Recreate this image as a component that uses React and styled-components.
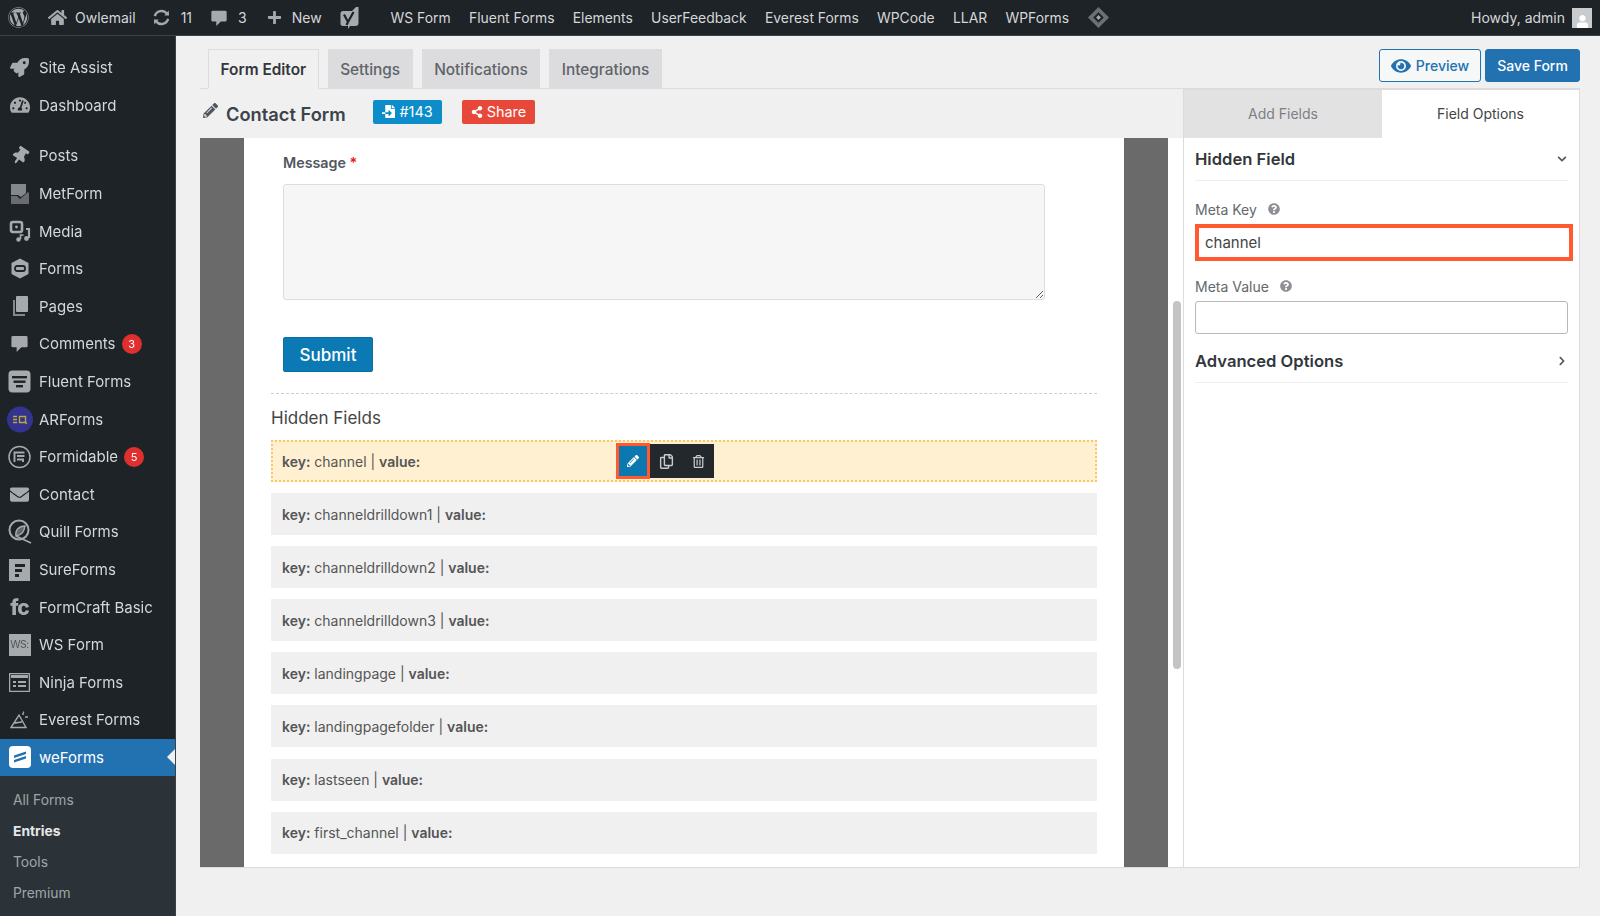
import React from "react";
import styled, { createGlobalStyle } from "styled-components";
import {
  FaWordpress,
  FaHome,
  FaPlus,
  FaRocket,
  FaTachometerAlt,
  FaThumbtack,
  FaEnvelope,
  FaPencilAlt,
  FaShareAlt,
  FaEye,
  FaQuestionCircle,
  FaChevronDown,
  FaChevronRight,
  FaUser,
  FaRegCopy,
  FaRegTrashAlt,
  FaFileImport,
} from "react-icons/fa";

const GlobalStyle = createGlobalStyle`
  html, body {
    margin: 0;
    padding: 0;
    height: 916px;
    overflow: hidden;
    background: #f0f0f1;
    font-family: Inter, "Liberation Sans", sans-serif;
  }
  * { box-sizing: border-box; }
`;

/* dashicons-ish drawings that the icon packages don't have */
const SyncIcon = () => (
  <svg width="19" height="19" viewBox="0 0 20 20" fill="none" stroke="currentColor" strokeWidth="2.6">
    <path d="M3 8.500a7.200 7.200 0 0 1 12.600-2.600" />
    <path d="M17 11.500a7.200 7.200 0 0 1-12.600 2.600" />
    <path d="M13 8l5-.2L17.600 2.600z" fill="currentColor" stroke="none" />
    <path d="M7 12l-5 .2.400 5.200z" fill="currentColor" stroke="none" />
  </svg>
);
const BubbleIcon = ({ size = 18 }) => (
  <svg width={size} height={size} viewBox="0 0 20 20" fill="currentColor">
    <path d="M3 2h14a1.500 1.500 0 0 1 1.500 1.500v9A1.500 1.500 0 0 1 17 14h-5l-5 5v-5H3a1.500 1.500 0 0 1-1.500-1.500v-9A1.500 1.500 0 0 1 3 2z" />
  </svg>
);
const YoastIcon = () => (
  <svg width="19" height="22" viewBox="0 0 19 22">
    <path d="M3 4h9l4-4h2.500L18.500 16a3 3 0 0 1-3 3H10l-2 3V19H3a2.500 2.500 0 0 1-2.500-2.500v-10A2.500 2.500 0 0 1 3 4z" fill="#a7aaad" />
    <path d="M4 7.500l4 7.500-1.500 3M13.500 5L8 15" fill="none" stroke="#1d2327" strokeWidth="2.200" />
  </svg>
);
const DiamondIcon = () => (
  <svg width="23" height="23" viewBox="0 0 24 24">
    <path d="M12 1l11 11-11 11L1 12z" fill="#6c7075" />
    <path d="M12 6.500l5.500 5.500-5.500 5.500L6.500 12z" fill="#1d2327" />
    <path d="M12 9.500l2.500 2.500-2.500 2.500L9.500 12z" fill="#a7aaad" />
  </svg>
);
const MetFormIcon = () => (
  <svg width="22" height="24" viewBox="0 0 22 24" fill="currentColor">
    <path d="M2 2h15v9l-5 4-3-2-7 0z" opacity=".75" />
    <path d="M2 14h6l3 3 8-7 1 1v11H2z" opacity=".55" />
  </svg>
);
const MediaIcon = () => (
  <svg width="22" height="23" viewBox="0 0 22 23" fill="none" stroke="currentColor">
    <rect x="2" y="2" width="11" height="10" rx="2" strokeWidth="2.600" />
    <circle cx="7.500" cy="7" r="1.400" fill="currentColor" stroke="none" />
    <path d="M17 9h3v9" strokeWidth="2.200" />
    <circle cx="17.500" cy="18.500" r="2.400" fill="currentColor" stroke="none" />
    <circle cx="9.500" cy="19.500" r="2.200" fill="currentColor" stroke="none" />
    <path d="M11.500 19v-4h3" strokeWidth="1.600" />
  </svg>
);
const FormsIcon = () => (
  <svg width="20" height="21" viewBox="0 0 20 21">
    <path d="M10 0.500l8.500 4.500v11L10 20.500 1.500 16V5z" fill="currentColor" />
    <rect x="5" y="8" width="10" height="5" rx="2" fill="none" stroke="#1d2327" strokeWidth="1.800" />
  </svg>
);
const PagesIcon = () => (
  <svg width="20" height="22" viewBox="0 0 20 22" fill="currentColor">
    <rect x="6" y="1" width="12" height="16" rx="1" />
    <path d="M3 5h2v14h10v2H3z" opacity=".75" />
  </svg>
);
const FluentIcon = () => (
  <svg width="23" height="23" viewBox="0 0 23 23">
    <rect x="0.500" y="0.500" width="22" height="22" rx="4" fill="#a7aaad" />
    <rect x="4" y="6" width="15" height="2.400" fill="#1d2327" />
    <rect x="5.500" y="10.500" width="12" height="2.400" fill="#1d2327" />
    <rect x="8" y="15" width="7" height="2.400" fill="#1d2327" />
  </svg>
);
const ArFormsIcon = () => (
  <svg width="26" height="27" viewBox="0 0 26 27">
    <circle cx="13" cy="13.500" r="13" fill="#34338f" />
    <path d="M6 10.500h4M6 13.500h4M6 16.500h4M12.500 10.500h6v6h-6zM18 16.500l2 1" fill="none" stroke="#b6a93a" strokeWidth="1.400" />
  </svg>
);
const FormidableIcon = () => (
  <svg width="23" height="24" viewBox="0 0 23 24" fill="none" stroke="#a7aaad">
    <circle cx="11.500" cy="12" r="10.500" strokeWidth="1.500" />
    <path d="M6.500 17V7.500h10M9 11h7.500M9 14.500h6v2.500" strokeWidth="1.900" />
  </svg>
);
const QuillIcon = () => (
  <svg width="24" height="25" viewBox="0 0 24 25" fill="none" stroke="#a7aaad">
    <circle cx="11" cy="11" r="9.500" strokeWidth="2" />
    <path d="M8 17c-1-6 3-10 9-10-1 6-3 9-9 10zM8 17l15 7" strokeWidth="1.500" fill="#a7aaad" fillOpacity=".5" />
  </svg>
);
const SureIcon = () => (
  <svg width="21" height="22" viewBox="0 0 21 22">
    <rect width="21" height="22" fill="#a7aaad" />
    <path d="M6 5h10v3H6zM6 10h7v3H6zM6 15h4v3H6z" fill="#1d2327" />
  </svg>
);
const NinjaIcon = () => (
  <svg width="21" height="19" viewBox="0 0 21 19">
    <rect x="0.500" y="0.500" width="20" height="18" rx="1" fill="none" stroke="#a7aaad" strokeWidth="1.500" />
    <rect x="2" y="2" width="17" height="3" fill="#a7aaad" />
    <path d="M4 8h3v2H4zM4 12h3v2H4zM9 8h8v2H9zM9 12h8v2H9z" fill="#a7aaad" />
  </svg>
);
const EverestIcon = () => (
  <svg width="20" height="18" viewBox="0 0 20 18" fill="none" stroke="#a7aaad" strokeWidth="1.400">
    <path d="M1 16.500h15L9 4z" />
    <path d="M4 12c3 0 5-1 8-1M12 3h2M15 6h3M13 0.800l1 1" />
  </svg>
);
const WeFormsIcon = () => (
  <svg width="22" height="22" viewBox="0 0 22 22">
    <rect width="22" height="22" rx="4" fill="#fff" />
    <path d="M5 9.500l12-4v2.500l-12 4zM5 14l12-4v2.500l-12 4z" fill="#2271b1" />
  </svg>
);

function FcGlyph({ children }) {
  return <FcText>{children}</FcText>;
}
function WsGlyph({ children }) {
  return <WsBox>{children}</WsBox>;
}

const menuTop = [
  { label: "Site Assist", icon: <FaRocket size={19} /> },
  { label: "Dashboard", icon: <FaTachometerAlt size={20} /> },
];
const menuMain = [
  { label: "Posts", icon: <FaThumbtack size={18} style={{ transform: "rotate(35deg)" }} /> },
  { label: "MetForm", icon: <MetFormIcon /> },
  { label: "Media", icon: <MediaIcon /> },
  { label: "Forms", icon: <FormsIcon /> },
  { label: "Pages", icon: <PagesIcon /> },
  { label: "Comments", icon: <BubbleIcon size={19} />, badge: 3 },
  { label: "Fluent Forms", icon: <FluentIcon /> },
  { label: "ARForms", icon: <ArFormsIcon /> },
  { label: "Formidable", icon: <FormidableIcon />, badge: 5 },
  { label: "Contact", icon: <FaEnvelope size={19} /> },
  { label: "Quill Forms", icon: <QuillIcon /> },
  { label: "SureForms", icon: <SureIcon /> },
  { label: "FormCraft Basic", icon: <FcGlyph>fc</FcGlyph> },
  { label: "WS Form", icon: <WsGlyph>WS:</WsGlyph> },
  { label: "Ninja Forms", icon: <NinjaIcon /> },
  { label: "Everest Forms", icon: <EverestIcon /> },
];
const subMenu = ["All Forms", "Entries", "Tools", "Premium"];
const barLinks = ["WS Form", "Fluent Forms", "Elements", "UserFeedback", "Everest Forms", "WPCode", "LLAR", "WPForms"];
const hiddenRows = [
  "channeldrilldown1",
  "channeldrilldown2",
  "channeldrilldown3",
  "landingpage",
  "landingpagefolder",
  "lastseen",
  "first_channel",
];

export default function App() {
  return (
    <Page>
      <GlobalStyle />
      <AdminBar>
        <BarGroup>
          <BarIcon $left={8}>
            <FaWordpress size={21} />
          </BarIcon>
          <BarIcon $left={19}>
            <FaHome size={19} />
          </BarIcon>
          <BarText $left={8}>Owlemail</BarText>
          <BarIcon $left={16}>
            <SyncIcon />
          </BarIcon>
          <BarText $left={10}>11</BarText>
          <BarIcon $left={18}>
            <BubbleIcon />
          </BarIcon>
          <BarText $left={10}>3</BarText>
          <BarIcon $left={20}>
            <FaPlus size={15} />
          </BarIcon>
          <BarText $left={10}>New</BarText>
          <BarIcon $left={18}>
            <YoastIcon />
          </BarIcon>
          <BarLinks>
            {barLinks.map((l) => (
              <BarLink key={l}>{l}</BarLink>
            ))}
            <DiamondIcon />
          </BarLinks>
        </BarGroup>
        <Howdy>
          Howdy, admin
          <Avatar>
            <FaUser size={13} />
          </Avatar>
        </Howdy>
      </AdminBar>

      <Body>
        <Sidebar>
          {menuTop.map((m) => (
            <MenuRow key={m.label}>
              <MenuIcon>{m.icon}</MenuIcon>
              {m.label}
            </MenuRow>
          ))}
          <MenuSeparator />
          {menuMain.map((m) => (
            <MenuRow key={m.label}>
              <MenuIcon>{m.icon}</MenuIcon>
              {m.label}
              {m.badge ? <Badge>{m.badge}</Badge> : null}
            </MenuRow>
          ))}
          <ActiveRow>
            <MenuIcon>
              <WeFormsIcon />
            </MenuIcon>
            weForms
          </ActiveRow>
          <SubMenu>
            {subMenu.map((s) => (
              <SubItem key={s} $current={s === "Entries"}>
                {s}
              </SubItem>
            ))}
          </SubMenu>
        </Sidebar>

        <Main>
          <TopRow>
            <Tabs>
              <Tab $active>Form Editor</Tab>
              <Tab>Settings</Tab>
              <Tab>Notifications</Tab>
              <Tab>Integrations</Tab>
            </Tabs>
            <Actions>
              <PreviewButton>
                <FaEye size={20} />
                Preview
              </PreviewButton>
              <SaveButton>Save Form</SaveButton>
            </Actions>
          </TopRow>

          <Builder>
            <Editor>
              <TitleRow>
                <TitlePencil>
                  <FaPencilAlt size={15} color="#50575e" />
                </TitlePencil>
                <FormTitle>Contact Form</FormTitle>
                <IdBadge>
                  <FaFileImport size={13} />
                  #143
                </IdBadge>
                <ShareBadge>
                  <FaShareAlt size={12} />
                  Share
                </ShareBadge>
              </TitleRow>
              <Canvas>
                <Stripe />
                <FormSheet>
                  <MessageBlock>
                    <FieldLabel>
                      Message <Req>*</Req>
                    </FieldLabel>
                    <MessageArea readOnly />
                    <SubmitButton>Submit</SubmitButton>
                  </MessageBlock>
                  <HiddenBlock>
                    <HiddenTitle>Hidden Fields</HiddenTitle>
                    <HiddenRow $selected>
                      <span>
                        <b>key:</b> channel | <b>value:</b>
                      </span>
                      <RowTools>
                        <EditTool>
                          <FaPencilAlt size={12} />
                        </EditTool>
                        <Tool>
                          <FaRegCopy size={15} />
                        </Tool>
                        <Tool>
                          <FaRegTrashAlt size={13} />
                        </Tool>
                      </RowTools>
                    </HiddenRow>
                    {hiddenRows.map((k) => (
                      <HiddenRow key={k}>
                        <span>
                          <b>key:</b> {k} | <b>value:</b>
                        </span>
                      </HiddenRow>
                    ))}
                  </HiddenBlock>
                </FormSheet>
                <Stripe />
                <ScrollTrack>
                  <ScrollThumb />
                </ScrollTrack>
              </Canvas>
            </Editor>

            <Panel>
              <PanelTabs>
                <PanelTab>Add Fields</PanelTab>
                <PanelTab $active>Field Options</PanelTab>
              </PanelTabs>
              <PanelBody>
                <SectionHead>
                  Hidden Field
                  <FaChevronDown size={10} color="#50575e" />
                </SectionHead>
                <OptionLabel>
                  Meta Key <FaQuestionCircle size={12} color="#8c8f94" />
                </OptionLabel>
                <KeyInput readOnly value="channel" />
                <OptionLabel>
                  Meta Value <FaQuestionCircle size={12} color="#8c8f94" />
                </OptionLabel>
                <ValueInput readOnly value="" />
                <AdvancedHead>
                  Advanced Options
                  <FaChevronRight size={10} color="#50575e" />
                </AdvancedHead>
              </PanelBody>
            </Panel>
          </Builder>
        </Main>
      </Body>
    </Page>
  );
}

const Page = styled.div`
  width: 1600px;
  height: 916px;
  overflow: hidden;
  display: flex;
  flex-direction: column;
  filter: blur(0.5px);
`;

const AdminBar = styled.header`
  height: 36px;
  flex: none;
  display: flex;
  align-items: center;
  justify-content: space-between;
  background: #1d2327;
  color: #d5d7d9;
  font-size: 14px;
  padding-right: 8px;
  border-bottom: 1px solid #3c4146;
`;

const BarGroup = styled.div`
  display: flex;
  align-items: center;
`;

const BarIcon = styled.span`
  display: flex;
  color: #a7aaad;
  margin-left: ${(p) => p.$left}px;
`;

const BarText = styled.span`
  margin-left: ${(p) => p.$left || 0}px;
  white-space: nowrap;
`;

const BarLink = styled.span`
  font-size: 13.9px;
  white-space: nowrap;
`;

const BarLinks = styled.div`
  display: flex;
  align-items: center;
  gap: 18.3px;
  margin-left: 32px;
`;

const Howdy = styled.div`
  display: flex;
  align-items: center;
  gap: 7px;
  white-space: nowrap;
`;

const Avatar = styled.span`
  width: 20px;
  height: 20px;
  background: #c9cbcd;
  color: #fff;
  display: flex;
  align-items: flex-end;
  justify-content: center;
`;

const Body = styled.div`
  flex: 1;
  display: flex;
  min-height: 0;
`;

const Sidebar = styled.nav`
  width: 176px;
  flex: none;
  background: #1d2327;
  color: #d5d7d9;
  font-size: 15px;
  padding-top: 13px;
  border-right: 1px solid #3c4146;
`;

const MenuRow = styled.div`
  height: 37.6px;
  display: flex;
  align-items: center;
  padding-left: 39px;
  position: relative;
  white-space: nowrap;
`;

const MenuIcon = styled.span`
  position: absolute;
  left: 0;
  top: 0;
  width: 39px;
  height: 100%;
  display: flex;
  align-items: center;
  justify-content: center;
  color: #a7aaad;
`;

const MenuSeparator = styled.div`
  height: 13px;
`;

const Badge = styled.span`
  width: 20px;
  height: 20px;
  margin-left: 6px;
  border-radius: 50%;
  background: #e02f2f;
  color: #fff;
  font-size: 11px;
  display: flex;
  align-items: center;
  justify-content: center;
`;

const ActiveRow = styled(MenuRow)`
  background: #2271b1;
  color: #fff;
  &::after {
    content: "";
    position: absolute;
    right: 0;
    top: 50%;
    margin-top: -8px;
    border: 8px solid transparent;
    border-right-color: #f0f0f1;
    border-left-width: 0;
  }
`;

const SubMenu = styled.div`
  background: #2c3338;
  padding-top: 9px;
  height: 160px;
`;

const SubItem = styled.div`
  height: 31px;
  line-height: 31px;
  padding-left: 13px;
  font-size: 13.8px;
  color: ${(p) => (p.$current ? "#e6e7e8" : "#a1a5a9")};
  font-weight: ${(p) => (p.$current ? 700 : 400)};
`;

const FcText = styled.span`
  font-size: 21px;
  line-height: 1;
  font-weight: 800;
  letter-spacing: -1px;
  color: #a7aaad;
`;

const WsBox = styled.span`
  width: 22px;
  height: 22px;
  background: #a7aaad;
  color: #50555a;
  font-size: 10.5px;
  letter-spacing: -0.5px;
  display: flex;
  align-items: center;
  justify-content: center;
`;

const Main = styled.main`
  flex: 1;
  min-width: 0;
  padding: 0 20px 0 24px;
  background: #f0f0f1;
`;

const TopRow = styled.div`
  height: 53px;
  display: flex;
  align-items: flex-end;
  justify-content: space-between;
  border-bottom: 1px solid #dcdcde;
`;

const Tabs = styled.div`
  display: flex;
  gap: 9px;
  margin-left: 8px;
  margin-bottom: -1px;
`;

const Tab = styled.div`
  height: 40px;
  padding: 0 11.5px;
  display: flex;
  align-items: center;
  font-size: 15.4px;
  font-weight: ${(p) => (p.$active ? 600 : 500)};
  color: ${(p) => (p.$active ? "#32373c" : "#5f6469")};
  background: ${(p) => (p.$active ? "#f0f0f1" : "#dcdcde")};
  border: 1px solid #dcdcde;
  border-bottom-color: ${(p) => (p.$active ? "#f0f0f1" : "#dcdcde")};
`;

const Actions = styled.div`
  display: flex;
  gap: 4px;
  margin-bottom: 6px;
`;

const PreviewButton = styled.button`
  width: 102px;
  height: 33px;
  display: flex;
  align-items: center;
  justify-content: center;
  gap: 5px;
  background: #f6f7f7;
  border: 1px solid #2271b1;
  border-radius: 3px;
  color: #2271b1;
  font: 500 14px Inter, sans-serif;
`;

const SaveButton = styled.button`
  width: 95px;
  height: 33px;
  background: #2271b1;
  border: 1px solid #2271b1;
  border-radius: 3px;
  color: #fff;
  font: 500 14px Inter, sans-serif;
`;

const Builder = styled.div`
  height: 779px;
  display: flex;
  border-bottom: 1px solid #dcdcde;
`;

const Editor = styled.section`
  width: 983px;
  flex: none;
  display: flex;
  flex-direction: column;
`;

const TitleRow = styled.div`
  height: 49px;
  flex: none;
  display: flex;
  align-items: center;
  padding-left: 3px;
`;

const TitlePencil = styled.span`
  display: flex;
  margin-bottom: 6px;
`;

const FormTitle = styled.h1`
  margin: 0 27px 0 8px;
  width: 120px;
  font-size: 18.3px;
  font-weight: 600;
  white-space: nowrap;
  color: #3c434a;
`;

const IdBadge = styled.span`
  width: 69px;
  height: 24px;
  margin-top: -4px;
  display: flex;
  align-items: center;
  justify-content: center;
  gap: 4px;
  border-radius: 2px;
  background: #0c8dc9;
  color: #fff;
  font-size: 14.4px;
`;

const ShareBadge = styled(IdBadge)`
  width: 73px;
  margin-left: 20px;
  background: #e8483a;
`;

const Canvas = styled.div`
  flex: 1;
  min-height: 0;
  display: flex;
`;

const Stripe = styled.div`
  width: 44px;
  flex: none;
  background: #6a6a6a;
`;

const FormSheet = styled.div`
  width: 880px;
  flex: none;
  background: #fff;
  overflow: hidden;
`;

const MessageBlock = styled.div`
  padding: 16px 0 0 39px;
`;

const FieldLabel = styled.label`
  display: block;
  font-size: 14.3px;
  line-height: 18px;
  font-weight: 600;
  color: #50575e;
  margin-bottom: 12px;
`;

const Req = styled.span`
  color: #e3191c;
`;

const MessageArea = styled.textarea`
  display: block;
  width: 762px;
  height: 116px;
  background: #f6f6f6;
  border: 1px solid #dddddd;
  border-radius: 3px;
  resize: both;
  outline: none;
`;

const SubmitButton = styled.button`
  display: block;
  margin-top: 37px;
  width: 90px;
  height: 35px;
  background: #0b79b3;
  border: 1px solid #0a6ea3;
  border-radius: 2px;
  color: #fff;
  font: 500 17px Inter, sans-serif;
`;

const HiddenBlock = styled.div`
  margin: 21px 27px 0;
  padding-top: 13px;
  border-top: 1px dashed #cfcfcf;
`;

const HiddenTitle = styled.h2`
  margin: 0 0 11px;
  font-size: 17px;
  line-height: 22px;
  font-weight: 400;
  color: #444;
`;

const HiddenRow = styled.div`
  position: relative;
  height: 42px;
  margin-bottom: 11.1px;
  padding-left: ${(p) => (p.$selected ? 9 : 11)}px;
  display: flex;
  align-items: center;
  font-size: 14px;
  color: #555;
  background: ${(p) => (p.$selected ? "#fff0d2" : "#f0f0f0")};
  border: ${(p) => (p.$selected ? "2px dotted #f8c965" : "none")};
  b {
    font-weight: 600;
  }
`;

const RowTools = styled.div`
  position: absolute;
  left: 343px;
  top: 2px;
  display: flex;
  align-items: center;
  height: 34px;
  width: 98px;
  background: #23282d;
`;

const EditTool = styled.span`
  width: 35px;
  height: 36px;
  display: flex;
  align-items: center;
  justify-content: center;
  background: #0d78b0;
  color: #fff;
  border: 3px solid #ff5a2f;
`;

const Tool = styled.span`
  width: 33px;
  display: flex;
  justify-content: center;
  color: #c9cbcd;
`;

const ScrollTrack = styled.div`
  width: 15px;
  flex: none;
  padding: 163px 2px 0 5px;
  background: #fff;
`;

const ScrollThumb = styled.div`
  height: 368px;
  border-radius: 4px;
  background: #c4c4c4;
`;

const Panel = styled.aside`
  width: 397px;
  flex: none;
  background: #fff;
  border-left: 1px solid #dcdcde;
  border-right: 1px solid #dcdcde;
  border-top: 1px solid #dcdcde;
`;

const PanelTabs = styled.div`
  display: flex;
  height: 48px;
`;

const PanelTab = styled.div`
  width: ${(p) => (p.$active ? "auto" : "198px")};
  flex: ${(p) => (p.$active ? 1 : "none")};
  display: flex;
  align-items: center;
  justify-content: center;
  padding-bottom: 2px;
  font-size: 14px;
  color: ${(p) => (p.$active ? "#444" : "#7c8085")};
  background: ${(p) => (p.$active ? "#fff" : "#e2e2e2")};
`;

const PanelBody = styled.div`
  padding: 0 11px;
`;

const SectionHead = styled.div`
  height: 43px;
  display: flex;
  align-items: center;
  justify-content: space-between;
  font-size: 16.6px;
  font-weight: 600;
  color: #32373c;
  border-bottom: 1px solid #eeeeee;
  svg {
    margin-right: 1px;
  }
`;

const AdvancedHead = styled(SectionHead)`
  margin-top: 13px;
  height: 36px;
  padding-bottom: 8px;
`;

const OptionLabel = styled.div`
  display: flex;
  align-items: center;
  gap: 11px;
  font-size: 14px;
  color: #63686d;
  height: 18px;
  margin: 19px 0 6px;
`;

const KeyInput = styled.input`
  display: block;
  width: 378px;
  height: 37px;
  margin-bottom: -3px;
  padding: 0 6px;
  border: 4px solid #ff5a2f;
  outline: none;
  font: 15px Inter, sans-serif;
  color: #444;
`;

const ValueInput = styled.input`
  display: block;
  width: 373px;
  height: 33px;
  border: 1px solid #b6b8ba;
  border-radius: 3px;
  outline: none;
`;
